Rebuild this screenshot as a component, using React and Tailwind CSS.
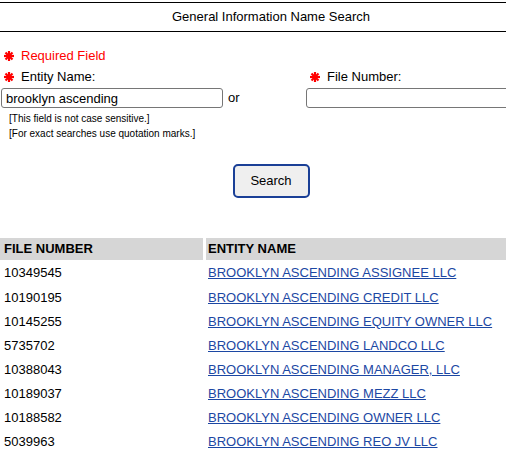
import React from 'react';

const rows = [
  ['10349545', 'BROOKLYN ASCENDING ASSIGNEE LLC'],
  ['10190195', 'BROOKLYN ASCENDING CREDIT LLC'],
  ['10145255', 'BROOKLYN ASCENDING EQUITY OWNER LLC'],
  ['5735702', 'BROOKLYN ASCENDING LANDCO LLC'],
  ['10388043', 'BROOKLYN ASCENDING MANAGER, LLC'],
  ['10189037', 'BROOKLYN ASCENDING MEZZ LLC'],
  ['10188582', 'BROOKLYN ASCENDING OWNER LLC'],
  ['5039963', 'BROOKLYN ASCENDING REO JV LLC'],
];

function Star() {
  return (
    <svg width="10" height="10" viewBox="0 0 10 10" className="shrink-0">
      <g stroke="#ff0000" strokeWidth="2.2" strokeLinecap="butt">
        <line x1="5" y1="0" x2="5" y2="10" />
        <line x1="0" y1="5" x2="10" y2="5" />
        <line x1="1.5" y1="1.5" x2="8.5" y2="8.5" />
        <line x1="8.5" y1="1.5" x2="1.5" y2="8.5" />
      </g>
    </svg>
  );
}

export default function App() {
  return (
    <div className="w-[506px] h-[470px] overflow-hidden bg-white text-black font-['Liberation_Sans',Arial,sans-serif] text-[13px]">
      <div className="w-[542px] pt-[2px]">
        <div className="h-[30px] border-y border-black flex items-center justify-center">
          General Information Name Search
        </div>

        <div className="mt-[16px] h-[16px] flex items-center gap-[7px] pl-[4px] text-[#ff0000]">
          <Star />
          <span>Required Field</span>
        </div>

        <div className="mt-[5px] flex">
          <div className="w-[306px] shrink-0">
            <div className="h-[16px] flex items-center gap-[7px] pl-[4px]">
              <Star />
              <span>Entity Name:</span>
            </div>
            <div className="mt-[3px] flex items-center pl-[1px]">
              <input
                type="text"
                defaultValue="brooklyn ascending"
                className="w-[222px] h-[20px] border border-[#767676] rounded-[3px] px-[4px] text-[13px] outline-none"
              />
              <span className="ml-[5px]">or</span>
            </div>
            <div className="mt-[3px] pl-[9px] text-[10px] leading-[15px]">
              <div>[This field is not case sensitive.]</div>
              <div>[For exact searches use quotation marks.]</div>
            </div>
          </div>
          <div className="flex-1">
            <div className="h-[16px] flex items-center gap-[7px] pl-[4px]">
              <Star />
              <span>File Number:</span>
            </div>
            <input
              type="text"
              className="mt-[3px] w-[236px] h-[20px] border border-[#767676] rounded-[3px] px-[4px] text-[13px] outline-none"
            />
          </div>
        </div>

        <div className="mt-[23px] flex justify-center">
          <button className="w-[77px] h-[34px] bg-[#efefef] border-2 border-[#1a3f96] rounded-[5px] text-[13px]">
            Search
          </button>
        </div>

        <div className="mt-[40px] grid grid-cols-[203px_336px] gap-x-[3px] gap-y-[2.15px]">
          <div className="h-[22px] bg-[#d6d6d6] font-bold flex items-center pl-[4px]">FILE NUMBER</div>
          <div className="h-[22px] bg-[#d6d6d6] font-bold flex items-center pl-[2px]">ENTITY NAME</div>
          {rows.map(([num, name]) => (
            <React.Fragment key={num}>
              <div className="h-[22px] flex items-center pl-[4px]">{num}</div>
              <div className="h-[22px] flex items-center pl-[2px]">
                <a href="#" className="text-[#1c47a3] underline">{name}</a>
              </div>
            </React.Fragment>
          ))}
        </div>
      </div>
    </div>
  );
}
